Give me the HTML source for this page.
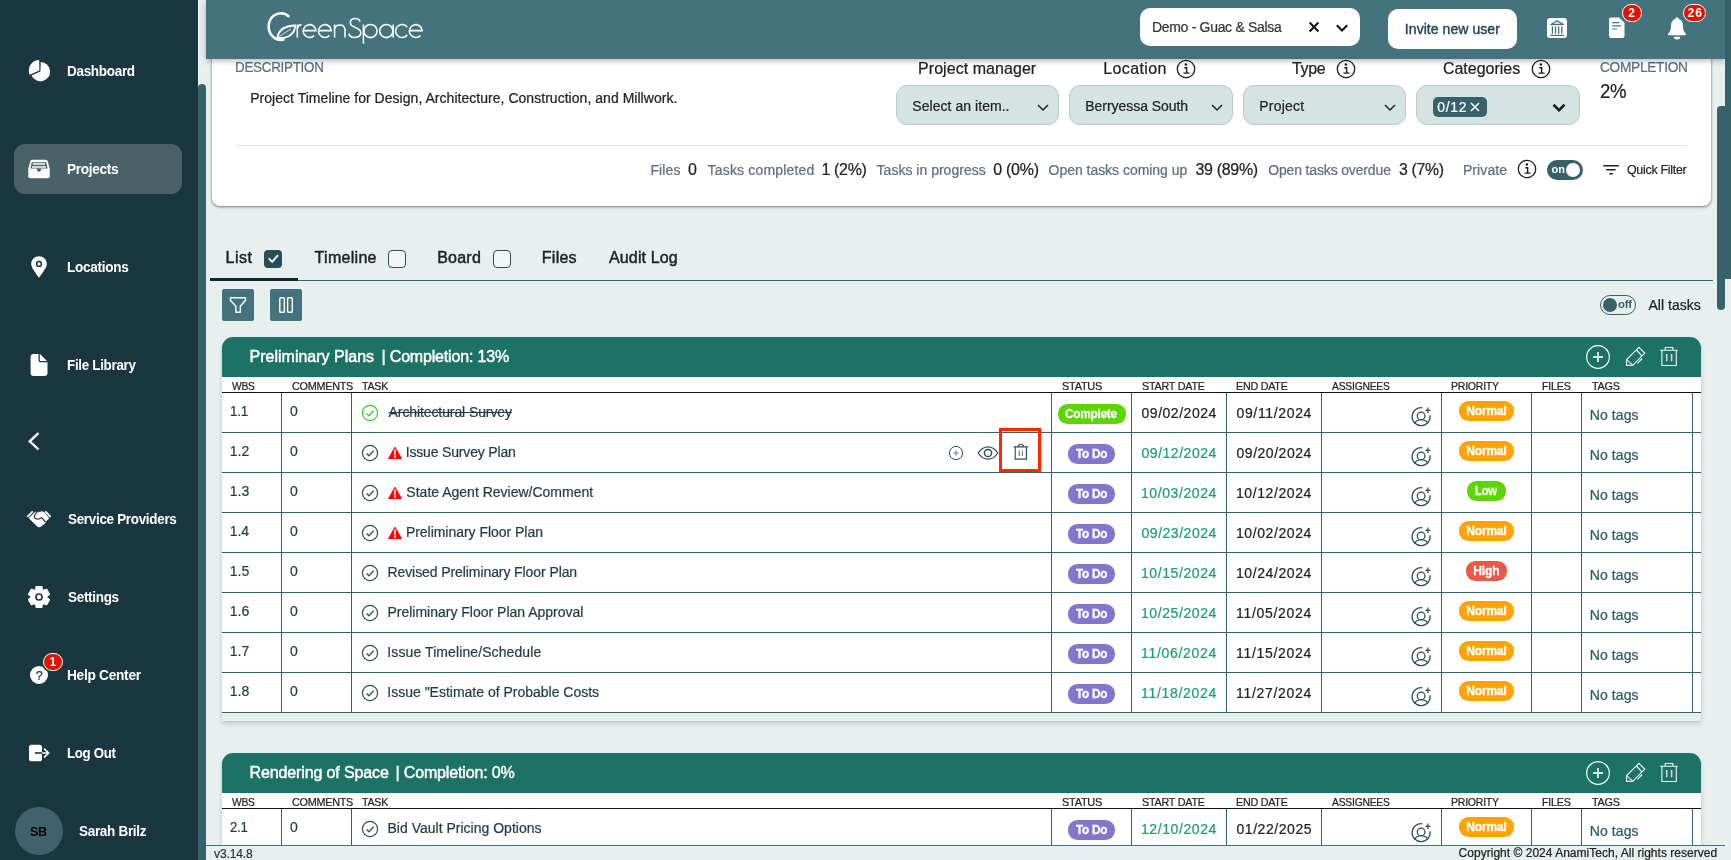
<!DOCTYPE html>
<html><head><meta charset="utf-8"><title>GreenSpace</title>
<style>
html,body{margin:0;padding:0;}
body{width:1731px;height:860px;overflow:hidden;position:relative;background:#e8f0ef;font-family:"Liberation Sans",sans-serif;}
.t{position:absolute;white-space:nowrap;display:block;transform-origin:0 0;}
.b{position:absolute;display:block;}
#w{position:absolute;left:0;top:0;width:1731px;height:860px;overflow:hidden;will-change:transform;transform:translateZ(0);}
</style></head><body><div id="w">
<div class="b" style="left:0px;top:0px;width:1731px;height:860px;background:#e8f0ef;"></div>
<div class="b" style="left:212px;top:40px;width:1499px;height:166px;background:#fff;border-radius:8px;box-shadow:0 1px 3px rgba(0,0,0,.45),0 0 2px rgba(0,0,0,.2);"></div>
<span class="t" style="left:235.23px;top:60px;font-size:14px;line-height:14px;color:#5b6f83;-webkit-text-stroke:0.22px #5b6f83;letter-spacing:-0.308px;transform:scaleX(0.9594);">DESCRIPTION</span>
<span class="t" style="left:250.18px;top:91px;font-size:14px;line-height:14px;color:#222;-webkit-text-stroke:0.22px #222;letter-spacing:0.034px;">Project Timeline for Design, Architecture, Construction, and Millwork.</span>
<div class="b" style="left:236px;top:145px;width:1451px;height:1px;background:#e1e4f0;"></div>
<span class="t" style="left:650.48px;top:163px;font-size:14px;line-height:14px;color:#5b6f83;-webkit-text-stroke:0.22px #5b6f83;letter-spacing:0.092px;">Files</span>
<span class="t" style="left:687.94px;top:162px;font-size:16px;line-height:16px;color:#222;-webkit-text-stroke:0.22px #222;letter-spacing:0.640px;">0</span>
<span class="t" style="left:707.62px;top:163px;font-size:14px;line-height:14px;color:#5b6f83;-webkit-text-stroke:0.22px #5b6f83;letter-spacing:0.164px;">Tasks completed</span>
<span class="t" style="left:821.40px;top:162px;font-size:16px;line-height:16px;color:#222;-webkit-text-stroke:0.22px #222;letter-spacing:-0.332px;">1 (2%)</span>
<span class="t" style="left:876.62px;top:163px;font-size:14px;line-height:14px;color:#5b6f83;-webkit-text-stroke:0.22px #5b6f83;letter-spacing:0.009px;">Tasks in progress</span>
<span class="t" style="left:993.24px;top:162px;font-size:16px;line-height:16px;color:#222;-webkit-text-stroke:0.22px #222;letter-spacing:-0.280px;">0 (0%)</span>
<span class="t" style="left:1048.57px;top:163px;font-size:14px;line-height:14px;color:#5b6f83;-webkit-text-stroke:0.22px #5b6f83;letter-spacing:-0.032px;">Open tasks coming up</span>
<span class="t" style="left:1195.44px;top:162px;font-size:16px;line-height:16px;color:#222;-webkit-text-stroke:0.22px #222;letter-spacing:-0.320px;">39 (89%)</span>
<span class="t" style="left:1268.17px;top:163px;font-size:14px;line-height:14px;color:#5b6f83;-webkit-text-stroke:0.22px #5b6f83;letter-spacing:-0.148px;">Open tasks overdue</span>
<span class="t" style="left:1399.05px;top:162px;font-size:16px;line-height:16px;color:#222;-webkit-text-stroke:0.22px #222;letter-spacing:-0.352px;transform:scaleX(0.9900);">3 (7%)</span>
<span class="t" style="left:1462.88px;top:163px;font-size:14px;line-height:14px;color:#5b6f83;-webkit-text-stroke:0.22px #5b6f83;letter-spacing:0.107px;">Private</span>
<svg class="b" style="left:1515.5px;top:158.2px;" width="22" height="22" viewBox="0 0 22 22"><circle cx="11" cy="11" r="8.700" fill="none" stroke="#1c1c1c" stroke-width="1.300"/><circle cx="10.900" cy="6.500" r="1.200" fill="#1c1c1c"/><path d="M9.300 9.700h2.300v5.200M8.500 15.100h6" stroke="#1c1c1c" stroke-width="1.400" fill="none"/></svg>
<div class="b" style="left:1547px;top:160px;width:36px;height:20px;background:#37626c;border-radius:10px;"></div>
<div class="b" style="left:1566.3px;top:163px;width:14px;height:14px;background:#fff;border-radius:7px;"></div>
<span class="t" style="left:1551.62px;top:164px;font-size:11px;line-height:11px;color:#fff;font-weight:700;letter-spacing:-0.075px;">on</span>
<svg class="b" style="left:1601px;top:160px;" width="20" height="20" viewBox="0 0 20 20"><path d="M2.800 5.700h14.500M5.700 9.700h8.400M8.900 13.800h2.400" stroke="#222" stroke-width="1.500" fill="none" stroke-linecap="round"/></svg>
<span class="t" style="left:1627.04px;top:164px;font-size:12.5px;line-height:12.5px;color:#222;-webkit-text-stroke:0.22px #222;letter-spacing:-0.275px;transform:scaleX(0.9920);">Quick Filter</span>
<span class="t" style="left:918.02px;top:61px;font-size:16px;line-height:16px;color:#222;-webkit-text-stroke:0.22px #222;letter-spacing:0.056px;">Project manager</span>
<span class="t" style="left:1103.32px;top:61px;font-size:16px;line-height:16px;color:#222;-webkit-text-stroke:0.22px #222;letter-spacing:0.366px;">Location</span>
<svg class="b" style="left:1174.6px;top:57.599999999999994px;" width="22" height="22" viewBox="0 0 22 22"><circle cx="11" cy="11" r="8.700" fill="none" stroke="#1c1c1c" stroke-width="1.300"/><circle cx="10.900" cy="6.500" r="1.200" fill="#1c1c1c"/><path d="M9.300 9.700h2.300v5.200M8.500 15.100h6" stroke="#1c1c1c" stroke-width="1.400" fill="none"/></svg>
<span class="t" style="left:1292.38px;top:61px;font-size:16px;line-height:16px;color:#222;-webkit-text-stroke:0.22px #222;letter-spacing:-0.352px;transform:scaleX(0.9993);">Type</span>
<svg class="b" style="left:1334.6px;top:57.599999999999994px;" width="22" height="22" viewBox="0 0 22 22"><circle cx="11" cy="11" r="8.700" fill="none" stroke="#1c1c1c" stroke-width="1.300"/><circle cx="10.900" cy="6.500" r="1.200" fill="#1c1c1c"/><path d="M9.300 9.700h2.300v5.200M8.500 15.100h6" stroke="#1c1c1c" stroke-width="1.400" fill="none"/></svg>
<span class="t" style="left:1442.90px;top:61px;font-size:16px;line-height:16px;color:#222;-webkit-text-stroke:0.22px #222;letter-spacing:0.000px;">Categories</span>
<svg class="b" style="left:1529.9px;top:57.599999999999994px;" width="22" height="22" viewBox="0 0 22 22"><circle cx="11" cy="11" r="8.700" fill="none" stroke="#1c1c1c" stroke-width="1.300"/><circle cx="10.900" cy="6.500" r="1.200" fill="#1c1c1c"/><path d="M9.300 9.700h2.300v5.200M8.500 15.100h6" stroke="#1c1c1c" stroke-width="1.400" fill="none"/></svg>
<div class="b" style="left:896px;top:85px;width:163px;height:40px;background:#d5e4e2;border-radius:11px;border:1px solid #b9cdc6;box-sizing:border-box;"></div>
<span class="t" style="left:912.37px;top:99px;font-size:14px;line-height:14px;color:#222;-webkit-text-stroke:0.22px #222;letter-spacing:0.044px;">Select an item..</span>
<svg class="b" style="left:1035px;top:99px;" width="16" height="16" viewBox="0 0 16 16"><path d="M3 6.0L8 11.0L13 6.0" stroke="#222" stroke-width="1.5" fill="none"/></svg>
<div class="b" style="left:1069px;top:85px;width:164px;height:40px;background:#d5e4e2;border-radius:11px;border:1px solid #b9cdc6;box-sizing:border-box;"></div>
<span class="t" style="left:1085.28px;top:99px;font-size:14px;line-height:14px;color:#222;-webkit-text-stroke:0.22px #222;letter-spacing:-0.043px;">Berryessa South</span>
<svg class="b" style="left:1208.7px;top:99px;" width="16" height="16" viewBox="0 0 16 16"><path d="M3 6.0L8 11.0L13 6.0" stroke="#222" stroke-width="1.5" fill="none"/></svg>
<div class="b" style="left:1243px;top:85px;width:163px;height:40px;background:#d5e4e2;border-radius:11px;border:1px solid #b9cdc6;box-sizing:border-box;"></div>
<span class="t" style="left:1259.18px;top:99px;font-size:14px;line-height:14px;color:#222;-webkit-text-stroke:0.22px #222;letter-spacing:0.247px;">Project</span>
<svg class="b" style="left:1381.7px;top:99px;" width="16" height="16" viewBox="0 0 16 16"><path d="M3 6.0L8 11.0L13 6.0" stroke="#222" stroke-width="1.5" fill="none"/></svg>
<div class="b" style="left:1416px;top:85px;width:164px;height:40px;background:#d5e4e2;border-radius:11px;border:1px solid #b9cdc6;box-sizing:border-box;"></div>
<svg class="b" style="left:1550.7px;top:99px;" width="16" height="16" viewBox="0 0 16 16"><path d="M2.5 5.75L8 11.25L13.5 5.75" stroke="#1a1a1a" stroke-width="2.5" fill="none"/></svg>
<div class="b" style="left:1433px;top:97px;width:54px;height:20px;background:#37626c;border-radius:5px;"></div>
<span class="t" style="left:1437.31px;top:100px;font-size:14px;line-height:14px;color:#fff;-webkit-text-stroke:0.22px #fff;letter-spacing:0.630px;">0/12</span>
<svg class="b" style="left:1469px;top:101px;" width="12" height="12" viewBox="0 0 12 12"><path d="M2 2l8 8M10 2l-8 8" stroke="#fff" stroke-width="1.5"/></svg>
<span class="t" style="left:1599.51px;top:60px;font-size:14px;line-height:14px;color:#5b6f83;-webkit-text-stroke:0.22px #5b6f83;letter-spacing:-0.308px;transform:scaleX(0.9793);">COMPLETION</span>
<span class="t" style="left:1599.67px;top:81px;font-size:20px;line-height:20px;color:#222;-webkit-text-stroke:0.22px #222;letter-spacing:-0.440px;transform:scaleX(0.9268);">2%</span>
<div class="b" style="left:210px;top:280px;width:1503px;height:1px;background:#37626c;"></div>
<div class="b" style="left:210px;top:278px;width:88px;height:3px;background:#15262c;"></div>
<span class="t" style="left:225.62px;top:250px;font-size:16px;line-height:16px;color:#222;-webkit-text-stroke:0.45px #222;letter-spacing:0.467px;">List</span>
<span class="t" style="left:314.58px;top:250px;font-size:16px;line-height:16px;color:#222;-webkit-text-stroke:0.45px #222;letter-spacing:0.289px;">Timeline</span>
<span class="t" style="left:437.22px;top:250px;font-size:16px;line-height:16px;color:#222;-webkit-text-stroke:0.45px #222;letter-spacing:0.225px;">Board</span>
<span class="t" style="left:541.82px;top:250px;font-size:16px;line-height:16px;color:#222;-webkit-text-stroke:0.45px #222;letter-spacing:0.245px;">Files</span>
<span class="t" style="left:609.00px;top:250px;font-size:16px;line-height:16px;color:#222;-webkit-text-stroke:0.45px #222;letter-spacing:0.145px;">Audit Log</span>
<div class="b" style="left:264px;top:250px;width:18px;height:18px;background:#274e59;border-radius:4px;"></div>
<svg class="b" style="left:264px;top:250px;" width="18" height="18" viewBox="0 0 18 18"><path d="M4.800 8.400l3.400 3.400L14 5.100" stroke="#fff" stroke-width="1.900" fill="none"/></svg>
<div class="b" style="left:388px;top:250px;width:18px;height:18px;background:#f1f6f6;border-radius:4px;border:1.3px solid #2d4f5b;box-sizing:border-box;"></div>
<div class="b" style="left:493px;top:250px;width:18px;height:18px;background:#f1f6f6;border-radius:4px;border:1.3px solid #2d4f5b;box-sizing:border-box;"></div>
<div class="b" style="left:222px;top:289px;width:32px;height:32px;background:#44737e;border-radius:2px;"></div>
<svg class="b" style="left:222px;top:289px;" width="32" height="32" viewBox="0 0 32 32"><path d="M8.400 8.700H23.500V11.300L18.300 17.300V23.200H13.900V17.300L8.400 11.300z" stroke="#fff" stroke-width="1.400" fill="none" stroke-linejoin="round"/></svg>
<div class="b" style="left:270px;top:289px;width:32px;height:32px;background:#44737e;border-radius:2px;"></div>
<svg class="b" style="left:270px;top:289px;" width="32" height="32" viewBox="0 0 32 32"><rect x="9.800" y="8.700" width="4.500" height="14.500" rx="0.800" stroke="#fff" stroke-width="1.400" fill="none"/><rect x="17.600" y="8.700" width="4.700" height="14.500" rx="0.800" stroke="#fff" stroke-width="1.400" fill="none"/></svg>
<div class="b" style="left:1600px;top:294.8px;width:36.2px;height:20.2px;background:transparent;border-radius:10.100px;border:1.200px solid #37626c;box-sizing:border-box;"></div>
<div class="b" style="left:1603px;top:298px;width:13.8px;height:13.8px;background:#37626c;border-radius:7px;"></div>
<span class="t" style="left:1617.80px;top:299px;font-size:11.5px;line-height:11.5px;color:#37626c;font-weight:700;letter-spacing:-0.253px;transform:scaleX(0.9847);">off</span>
<span class="t" style="left:1648.40px;top:298px;font-size:14px;line-height:14px;color:#222;-webkit-text-stroke:0.22px #222;letter-spacing:0.043px;">All tasks</span>
<div class="b" style="left:222px;top:337px;width:1479px;height:384px;background:#e8f0ef;border-radius:11px 11px 0 0;box-shadow:0 3px 5px rgba(0,0,0,.16),0 0 2px rgba(0,0,0,.05);"></div>
<div class="b" style="left:222px;top:367px;width:1479px;height:346px;background:#fff;"></div>
<div class="b" style="left:222px;top:337px;width:1479px;height:40px;background:#1c7365;border-radius:11px 11px 0 0;"></div>
<span class="t" style="left:249.52px;top:349px;font-size:16px;line-height:16px;color:#fff;-webkit-text-stroke:0.45px #fff;letter-spacing:0.004px;">Preliminary Plans</span>
<span class="t" style="left:381.54px;top:349px;font-size:16px;line-height:16px;color:#fff;-webkit-text-stroke:0.45px #fff;letter-spacing:-0.179px;">| Completion: 13%</span>
<svg class="b" style="left:1584px;top:343px;" width="28" height="28" viewBox="0 0 28 28"><circle cx="14" cy="14" r="11.350" fill="none" stroke="#fff" stroke-width="1.150"/><path d="M14 9v10M9 14h10" stroke="#d9ebe7" stroke-width="1.900"/></svg>
<svg class="b" style="left:1623px;top:345px;" width="24" height="24" viewBox="0 0 24 24"><path d="M16 2.400L21.700 8.100L9.700 20.300H3.500V14.500zM3.700 14.700L9.500 20.100M13.900 5.500L18.800 10.900M14.600 18.300L19.100 13.500" stroke="#e9f3f1" stroke-width="1.150" fill="none" stroke-linejoin="miter"/></svg>
<svg class="b" style="left:1657px;top:345px;" width="24" height="24" viewBox="0 0 24 24"><path d="M3.100 5.200h17.700M8.200 5.200V2.500h7.600v2.700M4.900 5.200v15.300h14.400V5.200" stroke="#e9f3f1" stroke-width="1.150" fill="none"/><path d="M9.700 9v7.300M14.600 9v7.300" stroke="#cfe4e0" stroke-width="1.500" fill="none"/></svg>
<span class="t" style="left:232.20px;top:381px;font-size:11px;line-height:11px;color:#222;-webkit-text-stroke:0.22px #222;letter-spacing:-0.242px;transform:scaleX(0.9294);">WBS</span>
<span class="t" style="left:291.66px;top:381px;font-size:11px;line-height:11px;color:#222;-webkit-text-stroke:0.22px #222;letter-spacing:-0.242px;transform:scaleX(0.9813);">COMMENTS</span>
<span class="t" style="left:362.39px;top:381px;font-size:11px;line-height:11px;color:#222;-webkit-text-stroke:0.22px #222;letter-spacing:-0.242px;transform:scaleX(0.9671);">TASK</span>
<span class="t" style="left:1061.51px;top:381px;font-size:11px;line-height:11px;color:#222;-webkit-text-stroke:0.22px #222;letter-spacing:-0.242px;transform:scaleX(0.9924);">STATUS</span>
<span class="t" style="left:1141.51px;top:381px;font-size:11px;line-height:11px;color:#222;-webkit-text-stroke:0.22px #222;letter-spacing:-0.242px;transform:scaleX(0.9799);">START DATE</span>
<span class="t" style="left:1236.14px;top:381px;font-size:11px;line-height:11px;color:#222;-webkit-text-stroke:0.22px #222;letter-spacing:-0.242px;transform:scaleX(0.9755);">END DATE</span>
<span class="t" style="left:1332.30px;top:381px;font-size:11px;line-height:11px;color:#222;-webkit-text-stroke:0.22px #222;letter-spacing:-0.242px;transform:scaleX(0.9395);">ASSIGNEES</span>
<span class="t" style="left:1451.46px;top:381px;font-size:11px;line-height:11px;color:#222;-webkit-text-stroke:0.22px #222;letter-spacing:-0.242px;transform:scaleX(0.9567);">PRIORITY</span>
<span class="t" style="left:1541.54px;top:381px;font-size:11px;line-height:11px;color:#222;-webkit-text-stroke:0.22px #222;letter-spacing:-0.242px;transform:scaleX(0.9774);">FILES</span>
<span class="t" style="left:1591.88px;top:381px;font-size:11px;line-height:11px;color:#222;-webkit-text-stroke:0.22px #222;letter-spacing:-0.242px;transform:scaleX(0.9852);">TAGS</span>
<div class="b" style="left:222px;top:392px;width:1479px;height:1px;background:#111;"></div>
<div class="b" style="left:222px;top:432px;width:1479px;height:1px;background:#33606b;"></div>
<span class="t" style="left:229.79px;top:404px;font-size:14px;line-height:14px;color:#1f3b45;-webkit-text-stroke:0.22px #1f3b45;letter-spacing:-0.308px;transform:scaleX(0.9613);">1.1</span>
<span class="t" style="left:290.01px;top:404px;font-size:14px;line-height:14px;color:#1f3b45;-webkit-text-stroke:0.22px #1f3b45;letter-spacing:0.010px;">0</span>
<svg class="b" style="left:360px;top:403.2px;" width="20" height="20" viewBox="0 0 20 20"><circle cx="10" cy="10" r="7.6" fill="none" stroke="#2fd02f" stroke-width="1.25"/><path d="M6.5 10.400l2.400 2.400L13.700 7.800" fill="none" stroke="#2fd02f" stroke-width="1.25"/></svg>
<span class="t" style="left:388.60px;top:405px;font-size:14px;line-height:14px;color:#1f3b45;-webkit-text-stroke:0.22px #1f3b45;letter-spacing:-0.100px;text-decoration:line-through;">Architectural Survey</span>
<div class="b" style="left:1058px;top:404px;width:68px;height:20px;background:#5bd603;border-radius:9.500px;"></div>
<span class="t" style="left:1065.43px;top:408px;font-size:12px;line-height:12px;color:#fff;font-weight:700;-webkit-text-stroke:0.3px #fff;letter-spacing:-0.264px;transform:scaleX(0.9871);">Complete</span>
<span class="t" style="left:1141.51px;top:406px;font-size:14px;line-height:14px;color:#222;-webkit-text-stroke:0.22px #222;letter-spacing:0.530px;">09/02/2024</span>
<span class="t" style="left:1236.51px;top:406px;font-size:14px;line-height:14px;color:#222;-webkit-text-stroke:0.22px #222;letter-spacing:0.647px;">09/11/2024</span>
<svg class="b" style="left:1408.8px;top:405px;" width="24" height="24" viewBox="0 0 24 24"><g fill="none" stroke="#2a505c" stroke-width="1.250"><path d="M13.350 2.790A9 9 0 1 0 21.010 10.450"/><circle cx="12.100" cy="10.900" r="3.800"/><path d="M5.400 18.300A8.200 8.200 0 0 1 19.100 18.300"/><path d="M18.900 2.600v5.400M16.200 5.300h5.400"/></g></svg>
<div class="b" style="left:1459px;top:401px;width:55px;height:20px;background:#ffa305;border-radius:9.500px;"></div>
<span class="t" style="left:1466.22px;top:405px;font-size:12px;line-height:12px;color:#fff;font-weight:700;-webkit-text-stroke:0.3px #fff;letter-spacing:-0.136px;">Normal</span>
<span class="t" style="left:1589.68px;top:408px;font-size:14px;line-height:14px;color:#2b5866;-webkit-text-stroke:0.22px #2b5866;letter-spacing:0.113px;">No tags</span>
<div class="b" style="left:222px;top:472px;width:1479px;height:1px;background:#33606b;"></div>
<span class="t" style="left:229.75px;top:444px;font-size:14px;line-height:14px;color:#1f3b45;-webkit-text-stroke:0.22px #1f3b45;letter-spacing:0.010px;">1.2</span>
<span class="t" style="left:290.01px;top:444px;font-size:14px;line-height:14px;color:#1f3b45;-webkit-text-stroke:0.22px #1f3b45;letter-spacing:0.010px;">0</span>
<svg class="b" style="left:360px;top:443.2px;" width="20" height="20" viewBox="0 0 20 20"><circle cx="10" cy="10" r="7.6" fill="none" stroke="#2d4f5b" stroke-width="1.25"/><path d="M6.5 10.400l2.400 2.400L13.700 7.800" fill="none" stroke="#2d4f5b" stroke-width="1.25"/></svg>
<svg class="b" style="left:388px;top:446px;" width="14" height="14" viewBox="0 0 14 14"><path d="M6.950 1.200L13.300 12.500H0.600z" fill="#ff0505" stroke="#ff0505" stroke-width="1" stroke-linejoin="round"/><path d="M6.950 3.300v6.200M6.950 10.100v1.700" stroke="#ffb3b3" stroke-width="2"/></svg>
<span class="t" style="left:405.74px;top:445px;font-size:14px;line-height:14px;color:#1f3b45;-webkit-text-stroke:0.22px #1f3b45;letter-spacing:-0.171px;">Issue Survey Plan</span>
<div class="b" style="left:1068px;top:444px;width:47px;height:20px;background:#8576cc;border-radius:9.500px;"></div>
<span class="t" style="left:1075.88px;top:448px;font-size:12px;line-height:12px;color:#fff;font-weight:700;-webkit-text-stroke:0.3px #fff;letter-spacing:-0.264px;transform:scaleX(0.9770);">To Do</span>
<span class="t" style="left:1141.51px;top:446px;font-size:14px;line-height:14px;color:#1f9d6e;-webkit-text-stroke:0.22px #1f9d6e;letter-spacing:0.530px;">09/12/2024</span>
<span class="t" style="left:1236.51px;top:446px;font-size:14px;line-height:14px;color:#222;-webkit-text-stroke:0.22px #222;letter-spacing:0.530px;">09/20/2024</span>
<svg class="b" style="left:1408.8px;top:445px;" width="24" height="24" viewBox="0 0 24 24"><g fill="none" stroke="#2a505c" stroke-width="1.250"><path d="M13.350 2.790A9 9 0 1 0 21.010 10.450"/><circle cx="12.100" cy="10.900" r="3.800"/><path d="M5.400 18.300A8.200 8.200 0 0 1 19.100 18.300"/><path d="M18.900 2.600v5.400M16.200 5.300h5.400"/></g></svg>
<div class="b" style="left:1459px;top:441px;width:55px;height:20px;background:#ffa305;border-radius:9.500px;"></div>
<span class="t" style="left:1466.22px;top:445px;font-size:12px;line-height:12px;color:#fff;font-weight:700;-webkit-text-stroke:0.3px #fff;letter-spacing:-0.136px;">Normal</span>
<span class="t" style="left:1589.68px;top:448px;font-size:14px;line-height:14px;color:#2b5866;-webkit-text-stroke:0.22px #2b5866;letter-spacing:0.113px;">No tags</span>
<div class="b" style="left:222px;top:512px;width:1479px;height:1px;background:#33606b;"></div>
<span class="t" style="left:229.75px;top:484px;font-size:14px;line-height:14px;color:#1f3b45;-webkit-text-stroke:0.22px #1f3b45;letter-spacing:-0.025px;">1.3</span>
<span class="t" style="left:290.01px;top:484px;font-size:14px;line-height:14px;color:#1f3b45;-webkit-text-stroke:0.22px #1f3b45;letter-spacing:0.010px;">0</span>
<svg class="b" style="left:360px;top:483.2px;" width="20" height="20" viewBox="0 0 20 20"><circle cx="10" cy="10" r="7.6" fill="none" stroke="#2d4f5b" stroke-width="1.25"/><path d="M6.5 10.400l2.400 2.400L13.700 7.800" fill="none" stroke="#2d4f5b" stroke-width="1.25"/></svg>
<svg class="b" style="left:388px;top:486px;" width="14" height="14" viewBox="0 0 14 14"><path d="M6.950 1.200L13.300 12.500H0.600z" fill="#ff0505" stroke="#ff0505" stroke-width="1" stroke-linejoin="round"/><path d="M6.950 3.300v6.200M6.950 10.100v1.700" stroke="#ffb3b3" stroke-width="2"/></svg>
<span class="t" style="left:406.37px;top:485px;font-size:14px;line-height:14px;color:#1f3b45;-webkit-text-stroke:0.22px #1f3b45;letter-spacing:0.002px;">State Agent Review/Comment</span>
<div class="b" style="left:1068px;top:484px;width:47px;height:20px;background:#8576cc;border-radius:9.500px;"></div>
<span class="t" style="left:1075.88px;top:488px;font-size:12px;line-height:12px;color:#fff;font-weight:700;-webkit-text-stroke:0.3px #fff;letter-spacing:-0.264px;transform:scaleX(0.9770);">To Do</span>
<span class="t" style="left:1140.95px;top:486px;font-size:14px;line-height:14px;color:#1f9d6e;-webkit-text-stroke:0.22px #1f9d6e;letter-spacing:0.592px;">10/03/2024</span>
<span class="t" style="left:1235.95px;top:486px;font-size:14px;line-height:14px;color:#222;-webkit-text-stroke:0.22px #222;letter-spacing:0.592px;">10/12/2024</span>
<svg class="b" style="left:1408.8px;top:485px;" width="24" height="24" viewBox="0 0 24 24"><g fill="none" stroke="#2a505c" stroke-width="1.250"><path d="M13.350 2.790A9 9 0 1 0 21.010 10.450"/><circle cx="12.100" cy="10.900" r="3.800"/><path d="M5.400 18.300A8.200 8.200 0 0 1 19.100 18.300"/><path d="M18.900 2.600v5.400M16.200 5.300h5.400"/></g></svg>
<div class="b" style="left:1467px;top:481px;width:39px;height:20px;background:#5bd603;border-radius:9.500px;"></div>
<span class="t" style="left:1475.17px;top:485px;font-size:12px;line-height:12px;color:#fff;font-weight:700;-webkit-text-stroke:0.3px #fff;letter-spacing:-0.264px;transform:scaleX(0.9387);">Low</span>
<span class="t" style="left:1589.68px;top:488px;font-size:14px;line-height:14px;color:#2b5866;-webkit-text-stroke:0.22px #2b5866;letter-spacing:0.113px;">No tags</span>
<div class="b" style="left:222px;top:552px;width:1479px;height:1px;background:#33606b;"></div>
<span class="t" style="left:229.75px;top:524px;font-size:14px;line-height:14px;color:#1f3b45;-webkit-text-stroke:0.22px #1f3b45;letter-spacing:-0.130px;">1.4</span>
<span class="t" style="left:290.01px;top:524px;font-size:14px;line-height:14px;color:#1f3b45;-webkit-text-stroke:0.22px #1f3b45;letter-spacing:0.010px;">0</span>
<svg class="b" style="left:360px;top:523.2px;" width="20" height="20" viewBox="0 0 20 20"><circle cx="10" cy="10" r="7.6" fill="none" stroke="#2d4f5b" stroke-width="1.25"/><path d="M6.5 10.400l2.400 2.400L13.700 7.800" fill="none" stroke="#2d4f5b" stroke-width="1.25"/></svg>
<svg class="b" style="left:388px;top:526px;" width="14" height="14" viewBox="0 0 14 14"><path d="M6.950 1.200L13.300 12.500H0.600z" fill="#ff0505" stroke="#ff0505" stroke-width="1" stroke-linejoin="round"/><path d="M6.950 3.300v6.200M6.950 10.100v1.700" stroke="#ffb3b3" stroke-width="2"/></svg>
<span class="t" style="left:405.88px;top:525px;font-size:14px;line-height:14px;color:#1f3b45;-webkit-text-stroke:0.22px #1f3b45;letter-spacing:-0.030px;">Preliminary Floor Plan</span>
<div class="b" style="left:1068px;top:524px;width:47px;height:20px;background:#8576cc;border-radius:9.500px;"></div>
<span class="t" style="left:1075.88px;top:528px;font-size:12px;line-height:12px;color:#fff;font-weight:700;-webkit-text-stroke:0.3px #fff;letter-spacing:-0.264px;transform:scaleX(0.9770);">To Do</span>
<span class="t" style="left:1141.51px;top:526px;font-size:14px;line-height:14px;color:#1f9d6e;-webkit-text-stroke:0.22px #1f9d6e;letter-spacing:0.530px;">09/23/2024</span>
<span class="t" style="left:1235.95px;top:526px;font-size:14px;line-height:14px;color:#222;-webkit-text-stroke:0.22px #222;letter-spacing:0.592px;">10/02/2024</span>
<svg class="b" style="left:1408.8px;top:525px;" width="24" height="24" viewBox="0 0 24 24"><g fill="none" stroke="#2a505c" stroke-width="1.250"><path d="M13.350 2.790A9 9 0 1 0 21.010 10.450"/><circle cx="12.100" cy="10.900" r="3.800"/><path d="M5.400 18.300A8.200 8.200 0 0 1 19.100 18.300"/><path d="M18.900 2.600v5.400M16.200 5.300h5.400"/></g></svg>
<div class="b" style="left:1459px;top:521px;width:55px;height:20px;background:#ffa305;border-radius:9.500px;"></div>
<span class="t" style="left:1466.22px;top:525px;font-size:12px;line-height:12px;color:#fff;font-weight:700;-webkit-text-stroke:0.3px #fff;letter-spacing:-0.136px;">Normal</span>
<span class="t" style="left:1589.68px;top:528px;font-size:14px;line-height:14px;color:#2b5866;-webkit-text-stroke:0.22px #2b5866;letter-spacing:0.113px;">No tags</span>
<div class="b" style="left:222px;top:592px;width:1479px;height:1px;background:#33606b;"></div>
<span class="t" style="left:229.75px;top:564px;font-size:14px;line-height:14px;color:#1f3b45;-webkit-text-stroke:0.22px #1f3b45;letter-spacing:-0.025px;">1.5</span>
<span class="t" style="left:290.01px;top:564px;font-size:14px;line-height:14px;color:#1f3b45;-webkit-text-stroke:0.22px #1f3b45;letter-spacing:0.010px;">0</span>
<svg class="b" style="left:360px;top:563.2px;" width="20" height="20" viewBox="0 0 20 20"><circle cx="10" cy="10" r="7.6" fill="none" stroke="#2d4f5b" stroke-width="1.25"/><path d="M6.5 10.400l2.400 2.400L13.700 7.800" fill="none" stroke="#2d4f5b" stroke-width="1.25"/></svg>
<span class="t" style="left:387.48px;top:565px;font-size:14px;line-height:14px;color:#1f3b45;-webkit-text-stroke:0.22px #1f3b45;letter-spacing:-0.086px;">Revised Preliminary Floor Plan</span>
<div class="b" style="left:1068px;top:564px;width:47px;height:20px;background:#8576cc;border-radius:9.500px;"></div>
<span class="t" style="left:1075.88px;top:568px;font-size:12px;line-height:12px;color:#fff;font-weight:700;-webkit-text-stroke:0.3px #fff;letter-spacing:-0.264px;transform:scaleX(0.9770);">To Do</span>
<span class="t" style="left:1140.95px;top:566px;font-size:14px;line-height:14px;color:#1f9d6e;-webkit-text-stroke:0.22px #1f9d6e;letter-spacing:0.592px;">10/15/2024</span>
<span class="t" style="left:1235.95px;top:566px;font-size:14px;line-height:14px;color:#222;-webkit-text-stroke:0.22px #222;letter-spacing:0.592px;">10/24/2024</span>
<svg class="b" style="left:1408.8px;top:565px;" width="24" height="24" viewBox="0 0 24 24"><g fill="none" stroke="#2a505c" stroke-width="1.250"><path d="M13.350 2.790A9 9 0 1 0 21.010 10.450"/><circle cx="12.100" cy="10.900" r="3.800"/><path d="M5.400 18.300A8.200 8.200 0 0 1 19.100 18.300"/><path d="M18.900 2.600v5.400M16.200 5.300h5.400"/></g></svg>
<div class="b" style="left:1466px;top:561px;width:41px;height:20px;background:#ea5946;border-radius:9.500px;"></div>
<span class="t" style="left:1473.22px;top:565px;font-size:12px;line-height:12px;color:#fff;font-weight:700;-webkit-text-stroke:0.3px #fff;letter-spacing:-0.113px;">High</span>
<span class="t" style="left:1589.68px;top:568px;font-size:14px;line-height:14px;color:#2b5866;-webkit-text-stroke:0.22px #2b5866;letter-spacing:0.113px;">No tags</span>
<div class="b" style="left:222px;top:632px;width:1479px;height:1px;background:#33606b;"></div>
<span class="t" style="left:229.75px;top:604px;font-size:14px;line-height:14px;color:#1f3b45;-webkit-text-stroke:0.22px #1f3b45;letter-spacing:-0.025px;">1.6</span>
<span class="t" style="left:290.01px;top:604px;font-size:14px;line-height:14px;color:#1f3b45;-webkit-text-stroke:0.22px #1f3b45;letter-spacing:0.010px;">0</span>
<svg class="b" style="left:360px;top:603.2px;" width="20" height="20" viewBox="0 0 20 20"><circle cx="10" cy="10" r="7.6" fill="none" stroke="#2d4f5b" stroke-width="1.25"/><path d="M6.5 10.400l2.400 2.400L13.700 7.800" fill="none" stroke="#2d4f5b" stroke-width="1.25"/></svg>
<span class="t" style="left:387.48px;top:605px;font-size:14px;line-height:14px;color:#1f3b45;-webkit-text-stroke:0.22px #1f3b45;letter-spacing:-0.004px;">Preliminary Floor Plan Approval</span>
<div class="b" style="left:1068px;top:604px;width:47px;height:20px;background:#8576cc;border-radius:9.500px;"></div>
<span class="t" style="left:1075.88px;top:608px;font-size:12px;line-height:12px;color:#fff;font-weight:700;-webkit-text-stroke:0.3px #fff;letter-spacing:-0.264px;transform:scaleX(0.9770);">To Do</span>
<span class="t" style="left:1140.95px;top:606px;font-size:14px;line-height:14px;color:#1f9d6e;-webkit-text-stroke:0.22px #1f9d6e;letter-spacing:0.592px;">10/25/2024</span>
<span class="t" style="left:1235.95px;top:606px;font-size:14px;line-height:14px;color:#222;-webkit-text-stroke:0.22px #222;letter-spacing:0.709px;">11/05/2024</span>
<svg class="b" style="left:1408.8px;top:605px;" width="24" height="24" viewBox="0 0 24 24"><g fill="none" stroke="#2a505c" stroke-width="1.250"><path d="M13.350 2.790A9 9 0 1 0 21.010 10.450"/><circle cx="12.100" cy="10.900" r="3.800"/><path d="M5.400 18.300A8.200 8.200 0 0 1 19.100 18.300"/><path d="M18.900 2.600v5.400M16.200 5.300h5.400"/></g></svg>
<div class="b" style="left:1459px;top:601px;width:55px;height:20px;background:#ffa305;border-radius:9.500px;"></div>
<span class="t" style="left:1466.22px;top:605px;font-size:12px;line-height:12px;color:#fff;font-weight:700;-webkit-text-stroke:0.3px #fff;letter-spacing:-0.136px;">Normal</span>
<span class="t" style="left:1589.68px;top:608px;font-size:14px;line-height:14px;color:#2b5866;-webkit-text-stroke:0.22px #2b5866;letter-spacing:0.113px;">No tags</span>
<div class="b" style="left:222px;top:672px;width:1479px;height:1px;background:#33606b;"></div>
<span class="t" style="left:229.75px;top:644px;font-size:14px;line-height:14px;color:#1f3b45;-webkit-text-stroke:0.22px #1f3b45;letter-spacing:0.010px;">1.7</span>
<span class="t" style="left:290.01px;top:644px;font-size:14px;line-height:14px;color:#1f3b45;-webkit-text-stroke:0.22px #1f3b45;letter-spacing:0.010px;">0</span>
<svg class="b" style="left:360px;top:643.2px;" width="20" height="20" viewBox="0 0 20 20"><circle cx="10" cy="10" r="7.6" fill="none" stroke="#2d4f5b" stroke-width="1.25"/><path d="M6.5 10.400l2.400 2.400L13.700 7.800" fill="none" stroke="#2d4f5b" stroke-width="1.25"/></svg>
<span class="t" style="left:387.34px;top:645px;font-size:14px;line-height:14px;color:#1f3b45;-webkit-text-stroke:0.22px #1f3b45;letter-spacing:0.098px;">Issue Timeline/Schedule</span>
<div class="b" style="left:1068px;top:644px;width:47px;height:20px;background:#8576cc;border-radius:9.500px;"></div>
<span class="t" style="left:1075.88px;top:648px;font-size:12px;line-height:12px;color:#fff;font-weight:700;-webkit-text-stroke:0.3px #fff;letter-spacing:-0.264px;transform:scaleX(0.9770);">To Do</span>
<span class="t" style="left:1140.95px;top:646px;font-size:14px;line-height:14px;color:#1f9d6e;-webkit-text-stroke:0.22px #1f9d6e;letter-spacing:0.709px;">11/06/2024</span>
<span class="t" style="left:1235.95px;top:646px;font-size:14px;line-height:14px;color:#222;-webkit-text-stroke:0.22px #222;letter-spacing:0.709px;">11/15/2024</span>
<svg class="b" style="left:1408.8px;top:645px;" width="24" height="24" viewBox="0 0 24 24"><g fill="none" stroke="#2a505c" stroke-width="1.250"><path d="M13.350 2.790A9 9 0 1 0 21.010 10.450"/><circle cx="12.100" cy="10.900" r="3.800"/><path d="M5.400 18.300A8.200 8.200 0 0 1 19.100 18.300"/><path d="M18.900 2.600v5.400M16.200 5.300h5.400"/></g></svg>
<div class="b" style="left:1459px;top:641px;width:55px;height:20px;background:#ffa305;border-radius:9.500px;"></div>
<span class="t" style="left:1466.22px;top:645px;font-size:12px;line-height:12px;color:#fff;font-weight:700;-webkit-text-stroke:0.3px #fff;letter-spacing:-0.136px;">Normal</span>
<span class="t" style="left:1589.68px;top:648px;font-size:14px;line-height:14px;color:#2b5866;-webkit-text-stroke:0.22px #2b5866;letter-spacing:0.113px;">No tags</span>
<div class="b" style="left:222px;top:712px;width:1479px;height:1px;background:#33606b;"></div>
<span class="t" style="left:229.75px;top:684px;font-size:14px;line-height:14px;color:#1f3b45;-webkit-text-stroke:0.22px #1f3b45;letter-spacing:-0.025px;">1.8</span>
<span class="t" style="left:290.01px;top:684px;font-size:14px;line-height:14px;color:#1f3b45;-webkit-text-stroke:0.22px #1f3b45;letter-spacing:0.010px;">0</span>
<svg class="b" style="left:360px;top:683.2px;" width="20" height="20" viewBox="0 0 20 20"><circle cx="10" cy="10" r="7.6" fill="none" stroke="#2d4f5b" stroke-width="1.25"/><path d="M6.5 10.400l2.400 2.400L13.700 7.800" fill="none" stroke="#2d4f5b" stroke-width="1.25"/></svg>
<span class="t" style="left:387.34px;top:685px;font-size:14px;line-height:14px;color:#1f3b45;-webkit-text-stroke:0.22px #1f3b45;letter-spacing:-0.007px;">Issue &quot;Estimate of Probable Costs</span>
<div class="b" style="left:1068px;top:684px;width:47px;height:20px;background:#8576cc;border-radius:9.500px;"></div>
<span class="t" style="left:1075.88px;top:688px;font-size:12px;line-height:12px;color:#fff;font-weight:700;-webkit-text-stroke:0.3px #fff;letter-spacing:-0.264px;transform:scaleX(0.9770);">To Do</span>
<span class="t" style="left:1140.95px;top:686px;font-size:14px;line-height:14px;color:#1f9d6e;-webkit-text-stroke:0.22px #1f9d6e;letter-spacing:0.709px;">11/18/2024</span>
<span class="t" style="left:1235.95px;top:686px;font-size:14px;line-height:14px;color:#222;-webkit-text-stroke:0.22px #222;letter-spacing:0.709px;">11/27/2024</span>
<svg class="b" style="left:1408.8px;top:685px;" width="24" height="24" viewBox="0 0 24 24"><g fill="none" stroke="#2a505c" stroke-width="1.250"><path d="M13.350 2.790A9 9 0 1 0 21.010 10.450"/><circle cx="12.100" cy="10.900" r="3.800"/><path d="M5.400 18.300A8.200 8.200 0 0 1 19.100 18.300"/><path d="M18.900 2.600v5.400M16.200 5.300h5.400"/></g></svg>
<div class="b" style="left:1459px;top:681px;width:55px;height:20px;background:#ffa305;border-radius:9.500px;"></div>
<span class="t" style="left:1466.22px;top:685px;font-size:12px;line-height:12px;color:#fff;font-weight:700;-webkit-text-stroke:0.3px #fff;letter-spacing:-0.136px;">Normal</span>
<span class="t" style="left:1589.68px;top:688px;font-size:14px;line-height:14px;color:#2b5866;-webkit-text-stroke:0.22px #2b5866;letter-spacing:0.113px;">No tags</span>
<div class="b" style="left:281px;top:393px;width:1px;height:320px;background:#33606b;"></div>
<div class="b" style="left:351px;top:393px;width:1px;height:320px;background:#33606b;"></div>
<div class="b" style="left:1051px;top:393px;width:1px;height:320px;background:#33606b;"></div>
<div class="b" style="left:1131px;top:393px;width:1px;height:320px;background:#33606b;"></div>
<div class="b" style="left:1226px;top:393px;width:1px;height:320px;background:#33606b;"></div>
<div class="b" style="left:1321px;top:393px;width:1px;height:320px;background:#33606b;"></div>
<div class="b" style="left:1441px;top:393px;width:1px;height:320px;background:#33606b;"></div>
<div class="b" style="left:1531px;top:393px;width:1px;height:320px;background:#33606b;"></div>
<div class="b" style="left:1581px;top:393px;width:1px;height:320px;background:#33606b;"></div>
<div class="b" style="left:1692px;top:393px;width:1px;height:320px;background:#33606b;"></div>
<div class="b" style="left:222px;top:753px;width:1479px;height:93px;background:#e8f0ef;border-radius:11px 11px 0 0;box-shadow:0 3px 5px rgba(0,0,0,.16),0 0 2px rgba(0,0,0,.05);"></div>
<div class="b" style="left:222px;top:783px;width:1479px;height:63px;background:#fff;"></div>
<div class="b" style="left:222px;top:753px;width:1479px;height:40px;background:#1c7365;border-radius:11px 11px 0 0;"></div>
<span class="t" style="left:249.52px;top:765px;font-size:16px;line-height:16px;color:#fff;-webkit-text-stroke:0.45px #fff;letter-spacing:-0.125px;">Rendering of Space</span>
<span class="t" style="left:395.44px;top:765px;font-size:16px;line-height:16px;color:#fff;-webkit-text-stroke:0.45px #fff;letter-spacing:-0.145px;">| Completion: 0%</span>
<svg class="b" style="left:1584px;top:759px;" width="28" height="28" viewBox="0 0 28 28"><circle cx="14" cy="14" r="11.350" fill="none" stroke="#fff" stroke-width="1.150"/><path d="M14 9v10M9 14h10" stroke="#d9ebe7" stroke-width="1.900"/></svg>
<svg class="b" style="left:1623px;top:761px;" width="24" height="24" viewBox="0 0 24 24"><path d="M16 2.400L21.700 8.100L9.700 20.300H3.500V14.500zM3.700 14.700L9.500 20.100M13.900 5.500L18.800 10.900M14.600 18.300L19.100 13.500" stroke="#e9f3f1" stroke-width="1.150" fill="none" stroke-linejoin="miter"/></svg>
<svg class="b" style="left:1657px;top:761px;" width="24" height="24" viewBox="0 0 24 24"><path d="M3.100 5.200h17.700M8.200 5.200V2.500h7.600v2.700M4.900 5.200v15.300h14.400V5.200" stroke="#e9f3f1" stroke-width="1.150" fill="none"/><path d="M9.700 9v7.300M14.600 9v7.300" stroke="#cfe4e0" stroke-width="1.500" fill="none"/></svg>
<span class="t" style="left:232.20px;top:797px;font-size:11px;line-height:11px;color:#222;-webkit-text-stroke:0.22px #222;letter-spacing:-0.242px;transform:scaleX(0.9294);">WBS</span>
<span class="t" style="left:291.66px;top:797px;font-size:11px;line-height:11px;color:#222;-webkit-text-stroke:0.22px #222;letter-spacing:-0.242px;transform:scaleX(0.9813);">COMMENTS</span>
<span class="t" style="left:362.39px;top:797px;font-size:11px;line-height:11px;color:#222;-webkit-text-stroke:0.22px #222;letter-spacing:-0.242px;transform:scaleX(0.9671);">TASK</span>
<span class="t" style="left:1061.51px;top:797px;font-size:11px;line-height:11px;color:#222;-webkit-text-stroke:0.22px #222;letter-spacing:-0.242px;transform:scaleX(0.9924);">STATUS</span>
<span class="t" style="left:1141.51px;top:797px;font-size:11px;line-height:11px;color:#222;-webkit-text-stroke:0.22px #222;letter-spacing:-0.242px;transform:scaleX(0.9799);">START DATE</span>
<span class="t" style="left:1236.14px;top:797px;font-size:11px;line-height:11px;color:#222;-webkit-text-stroke:0.22px #222;letter-spacing:-0.242px;transform:scaleX(0.9755);">END DATE</span>
<span class="t" style="left:1332.30px;top:797px;font-size:11px;line-height:11px;color:#222;-webkit-text-stroke:0.22px #222;letter-spacing:-0.242px;transform:scaleX(0.9395);">ASSIGNEES</span>
<span class="t" style="left:1451.46px;top:797px;font-size:11px;line-height:11px;color:#222;-webkit-text-stroke:0.22px #222;letter-spacing:-0.242px;transform:scaleX(0.9567);">PRIORITY</span>
<span class="t" style="left:1541.54px;top:797px;font-size:11px;line-height:11px;color:#222;-webkit-text-stroke:0.22px #222;letter-spacing:-0.242px;transform:scaleX(0.9774);">FILES</span>
<span class="t" style="left:1591.88px;top:797px;font-size:11px;line-height:11px;color:#222;-webkit-text-stroke:0.22px #222;letter-spacing:-0.242px;transform:scaleX(0.9852);">TAGS</span>
<div class="b" style="left:222px;top:808px;width:1479px;height:1px;background:#111;"></div>
<span class="t" style="left:230.14px;top:820px;font-size:14px;line-height:14px;color:#1f3b45;-webkit-text-stroke:0.22px #1f3b45;letter-spacing:-0.308px;transform:scaleX(0.9421);">2.1</span>
<span class="t" style="left:290.01px;top:820px;font-size:14px;line-height:14px;color:#1f3b45;-webkit-text-stroke:0.22px #1f3b45;letter-spacing:0.010px;">0</span>
<svg class="b" style="left:360px;top:819.2px;" width="20" height="20" viewBox="0 0 20 20"><circle cx="10" cy="10" r="7.6" fill="none" stroke="#2d4f5b" stroke-width="1.25"/><path d="M6.5 10.400l2.400 2.400L13.700 7.800" fill="none" stroke="#2d4f5b" stroke-width="1.25"/></svg>
<span class="t" style="left:387.48px;top:821px;font-size:14px;line-height:14px;color:#1f3b45;-webkit-text-stroke:0.22px #1f3b45;letter-spacing:0.009px;">Bid Vault Pricing Options</span>
<div class="b" style="left:1068px;top:820px;width:47px;height:20px;background:#8576cc;border-radius:9.500px;"></div>
<span class="t" style="left:1075.88px;top:824px;font-size:12px;line-height:12px;color:#fff;font-weight:700;-webkit-text-stroke:0.3px #fff;letter-spacing:-0.264px;transform:scaleX(0.9770);">To Do</span>
<span class="t" style="left:1140.95px;top:822px;font-size:14px;line-height:14px;color:#1f9d6e;-webkit-text-stroke:0.22px #1f9d6e;letter-spacing:0.592px;">12/10/2024</span>
<span class="t" style="left:1236.51px;top:822px;font-size:14px;line-height:14px;color:#222;-webkit-text-stroke:0.22px #222;letter-spacing:0.553px;">01/22/2025</span>
<svg class="b" style="left:1408.8px;top:821px;" width="24" height="24" viewBox="0 0 24 24"><g fill="none" stroke="#2a505c" stroke-width="1.250"><path d="M13.350 2.790A9 9 0 1 0 21.010 10.450"/><circle cx="12.100" cy="10.900" r="3.800"/><path d="M5.400 18.300A8.200 8.200 0 0 1 19.100 18.300"/><path d="M18.900 2.600v5.400M16.200 5.300h5.400"/></g></svg>
<div class="b" style="left:1459px;top:817px;width:55px;height:20px;background:#ffa305;border-radius:9.500px;"></div>
<span class="t" style="left:1466.22px;top:821px;font-size:12px;line-height:12px;color:#fff;font-weight:700;-webkit-text-stroke:0.3px #fff;letter-spacing:-0.136px;">Normal</span>
<span class="t" style="left:1589.68px;top:824px;font-size:14px;line-height:14px;color:#2b5866;-webkit-text-stroke:0.22px #2b5866;letter-spacing:0.113px;">No tags</span>
<div class="b" style="left:281px;top:809px;width:1px;height:37px;background:#33606b;"></div>
<div class="b" style="left:351px;top:809px;width:1px;height:37px;background:#33606b;"></div>
<div class="b" style="left:1051px;top:809px;width:1px;height:37px;background:#33606b;"></div>
<div class="b" style="left:1131px;top:809px;width:1px;height:37px;background:#33606b;"></div>
<div class="b" style="left:1226px;top:809px;width:1px;height:37px;background:#33606b;"></div>
<div class="b" style="left:1321px;top:809px;width:1px;height:37px;background:#33606b;"></div>
<div class="b" style="left:1441px;top:809px;width:1px;height:37px;background:#33606b;"></div>
<div class="b" style="left:1531px;top:809px;width:1px;height:37px;background:#33606b;"></div>
<div class="b" style="left:1581px;top:809px;width:1px;height:37px;background:#33606b;"></div>
<div class="b" style="left:1692px;top:809px;width:1px;height:37px;background:#33606b;"></div>
<svg class="b" style="left:946px;top:443px;" width="20" height="20" viewBox="0 0 20 20"><circle cx="10" cy="10" r="6.600" fill="none" stroke="#2d4f5b" stroke-width="1"/><path d="M10 7.300v5.400M7.300 10h5.400" stroke="#6c8790" stroke-width="1.2"/></svg>
<svg class="b" style="left:976px;top:443px;" width="24" height="20" viewBox="0 0 24 20"><path d="M2.200 10C5 5.500 8.500 3.800 12 3.800S19 5.500 21.800 10C19 14.500 15.500 16.200 12 16.200S5 14.500 2.200 10z" fill="none" stroke="#2d4f5b" stroke-width="1.3"/><circle cx="12" cy="10" r="3.600" fill="none" stroke="#2d4f5b" stroke-width="1.5"/></svg>
<svg class="b" style="left:1010px;top:441px;" width="22" height="22" viewBox="0 0 22 22"><path d="M3.600 5.800h14.500M8.300 5.800c0-3.400 5.200-3.400 5.200 0M5.200 5.800v12.300h11.200V5.800" stroke="#2d4f5b" stroke-width="1.150" fill="none"/><path d="M9.300 9.600v5.400M12.400 9.600v5.400" stroke="#6c8790" stroke-width="1.2"/></svg>
<div class="b" style="left:999px;top:428px;width:42px;height:44px;background:transparent;border:3px solid #ff2600;box-sizing:border-box;"></div>
<div class="b" style="left:206px;top:846px;width:1519px;height:14px;background:#e8f0ef;"></div>
<div class="b" style="left:206px;top:845px;width:1519px;height:1px;background:#44737e;"></div>
<span class="t" style="left:214.00px;top:848px;font-size:12px;line-height:12px;color:#333;-webkit-text-stroke:0.22px #333;letter-spacing:-0.113px;">v3.14.8</span>
<span class="t" style="left:1458.60px;top:847px;font-size:12px;line-height:12px;color:#222;-webkit-text-stroke:0.22px #222;letter-spacing:0.019px;">Copyright © 2024 AnamiTech, All rights reserved</span>
<div class="b" style="left:206px;top:0px;width:1519px;height:59px;background:#44737e;box-shadow:0 2px 6px rgba(0,0,0,.28);"></div>
<svg class="b" style="left:254px;top:0px;" width="180" height="59" viewBox="0 0 180 59"><g fill="none" stroke="#fff" stroke-width="1.55" stroke-linecap="butt">
<path d="M35.300 16.800A12.300 13.300 0 1 0 30.500 39.300" stroke-width="2.500"/>
<path d="M23.400 37.800C24.400 30.600 30.600 25.900 41 25.500C41.400 32.600 35 39.300 23.400 37.800z" stroke-width="1.900"/>
<path d="M25.200 36.600L37 28.700" stroke-width="0.800"/>
<path d="M43.300 24.500V37.400M43.300 29.500C43.500 26.500 45 24.800 47.500 24.900"/>
<path d="M49.300 30.600H62.000A6.400 6.400 0 1 0 60.200 35.500"/>
<path d="M64.600 30.600H77.300A6.400 6.400 0 1 0 75.500 35.500"/>
<path d="M80.600 24.500V37.400M80.600 30C80.600 23.200 91 23.200 91 30V37.400"/>
<path d="M106 21.500C105 17.500 96.500 17.300 96.300 22.700C96.300 28.500 106.800 26.500 106.800 32.800C106.600 38.800 96 39 94.800 33.500"/>
<path d="M109.400 24.500V43.600"/><circle cx="116.500" cy="31" r="6.600"/>
<circle cx="132.300" cy="31" r="6.600"/><path d="M139.200 24.500V37.400"/>
<path d="M153.200 27A6.500 6.500 0 1 0 153.200 35"/>
<path d="M155.500 30.600H168.200A6.400 6.400 0 1 0 166.400 35.500"/>
</g></svg>
<div class="b" style="left:1140px;top:8px;width:220px;height:38px;background:#fff;border-radius:10px;"></div>
<span class="t" style="left:1152.08px;top:20px;font-size:14px;line-height:14px;color:#333;-webkit-text-stroke:0.22px #333;letter-spacing:-0.308px;transform:scaleX(0.9993);">Demo - Guac &amp; Salsa</span>
<svg class="b" style="left:1307px;top:20px;" width="14" height="14" viewBox="0 0 14 14"><path d="M2.600 2.600l8.800 8.800M11.400 2.600l-8.800 8.800" stroke="#111" stroke-width="2.100"/></svg>
<svg class="b" style="left:1333.6px;top:20px;" width="16" height="16" viewBox="0 0 16 16"><path d="M2.800 5.300L8 10.500L13.200 5.300" stroke="#111" stroke-width="2.100" fill="none"/></svg>
<div class="b" style="left:1388px;top:9px;width:129px;height:39.5px;background:#fff;border-radius:10px;"></div>
<span class="t" style="left:1404.84px;top:22px;font-size:14px;line-height:14px;color:#1f4552;-webkit-text-stroke:0.39px #1f4552;letter-spacing:0.061px;">Invite new user</span>
<div class="b" style="left:1547px;top:18px;width:20px;height:20px;background:#fff;border-radius:3px;"></div>
<svg class="b" style="left:1547px;top:18px;" width="20" height="20" viewBox="0 0 20 20"><path d="M10.100 2.700L4.300 6.300H15.900z" fill="none" stroke="#3d6e79" stroke-width="1.200" stroke-linejoin="round"/><path d="M3.300 6.500H16.900" stroke="#3d6e79" stroke-width="1.100"/><path d="M5.400 8.200v7.500M8.500 8.200v7.500M11.700 8.200v7.500M14.800 8.200v7.500" stroke="#3d6e79" stroke-width="1.250"/><path d="M3.300 17.400h13.600" stroke="#3d6e79" stroke-width="1.200"/></svg>
<svg class="b" style="left:1607px;top:16px;" width="20" height="24" viewBox="0 0 20 24"><path d="M4 1.500h8.200l5.300 5.300V20a2 2 0 0 1-2 2H4a2 2 0 0 1-2-2V3.500a2 2 0 0 1 2-2z" fill="#fff"/><path d="M5.300 6.700h6.800M5.300 9.900h8.800M5.300 13h4.800" stroke="#44737e" stroke-width="1.200"/></svg>
<div class="b" style="left:1621.9px;top:3.9px;width:20px;height:17.8px;background:#e01300;border-radius:8.900px;border:1.200px solid #fff;box-sizing:border-box;"></div>
<span class="t" style="left:1628.24px;top:7px;font-size:12px;line-height:12px;color:#fff;font-weight:700;letter-spacing:0.820px;">2</span>
<svg class="b" style="left:1665px;top:15px;" width="24" height="26" viewBox="0 0 24 26"><path d="M12 2.300c0.900 0 1.500 0.600 1.500 1.400c3 0.900 4.500 3.500 4.500 6.800c0 3.700 0.700 6.200 2.800 8.300c0.500 0.600 0.200 1.500-0.700 1.500H3.900c-0.900 0-1.200-0.900-0.700-1.500C5.300 16.700 6 14.200 6 10.500c0-3.300 1.500-5.900 4.500-6.800c0-0.800 0.600-1.400 1.500-1.400z" fill="#fff"/><path d="M8.800 21.800h6.400a3.200 2.600 0 0 1-6.400 0z" fill="#fff"/></svg>
<div class="b" style="left:1682.5px;top:3.9px;width:23.4px;height:17.8px;background:#e01300;border-radius:8.900px;border:1.200px solid #fff;box-sizing:border-box;"></div>
<span class="t" style="left:1687.44px;top:7px;font-size:12px;line-height:12px;color:#fff;font-weight:700;letter-spacing:1.160px;">26</span>
<div class="b" style="left:1717px;top:106px;width:8px;height:204px;background:#37626c;border-radius:4px 0 4px 4px;"></div>
<div class="b" style="left:1725px;top:0px;width:6px;height:279px;background:#37626c;border-radius:0;"></div>
<div class="b" style="left:1725px;top:59px;width:0px;height:0px;background:#37626c;"></div>
<div class="b" style="left:0px;top:0px;width:198px;height:860px;background:#1a3740;"></div>
<div class="b" style="left:198px;top:84px;width:8px;height:776px;background:#37626c;border-radius:4px 4px 0 0;"></div>
<div class="b" style="left:14px;top:144px;width:168px;height:50px;background:#486268;border-radius:11px;"></div>
<span class="t" style="left:67.12px;top:64px;font-size:14px;line-height:14px;color:#fff;font-weight:700;letter-spacing:-0.308px;transform:scaleX(0.9637);">Dashboard</span>
<span class="t" style="left:67.11px;top:162px;font-size:14px;line-height:14px;color:#fff;font-weight:700;letter-spacing:-0.308px;transform:scaleX(0.9734);">Projects</span>
<span class="t" style="left:67.12px;top:260px;font-size:14px;line-height:14px;color:#fff;font-weight:700;letter-spacing:-0.308px;transform:scaleX(0.9692);">Locations</span>
<span class="t" style="left:67.13px;top:358px;font-size:14px;line-height:14px;color:#fff;font-weight:700;letter-spacing:-0.308px;transform:scaleX(0.9556);">File Library</span>
<span class="t" style="left:67.66px;top:512px;font-size:14px;line-height:14px;color:#fff;font-weight:700;letter-spacing:-0.308px;transform:scaleX(0.9597);">Service Providers</span>
<span class="t" style="left:67.66px;top:590px;font-size:14px;line-height:14px;color:#fff;font-weight:700;letter-spacing:-0.308px;transform:scaleX(0.9630);">Settings</span>
<span class="t" style="left:67.11px;top:668px;font-size:14px;line-height:14px;color:#fff;font-weight:700;letter-spacing:-0.308px;transform:scaleX(0.9811);">Help Center</span>
<span class="t" style="left:67.14px;top:746px;font-size:14px;line-height:14px;color:#fff;font-weight:700;letter-spacing:-0.308px;transform:scaleX(0.9450);">Log Out</span>
<span class="t" style="left:78.96px;top:824px;font-size:14px;line-height:14px;color:#fff;font-weight:700;letter-spacing:-0.308px;transform:scaleX(0.9635);">Sarah Brilz</span>
<div class="b" style="left:14.8px;top:806.8px;width:48.4px;height:48.4px;background:#3f626b;border-radius:25px;"></div>
<span class="t" style="left:30.49px;top:825px;font-size:13px;line-height:13px;color:#050505;font-weight:700;letter-spacing:-0.286px;transform:scaleX(0.9660);">SB</span>
<svg class="b" style="left:27px;top:59px;" width="24" height="24" viewBox="0 0 24 24"><path d="M13.400 12.600L13.740 2.900A9.700 9.700 0 1 1 4.540 16.550z" fill="#fff"/><path d="M12.400 11.600L2.640 15.740A10.600 10.600 0 0 1 12.200 1z" fill="#fff"/></svg>
<svg class="b" style="left:27px;top:158px;" width="24" height="22" viewBox="0 0 24 22"><path d="M5.400 1.800H18.600Q20.300 1.800 20.800 3.600L22.700 10.500V18.300Q22.700 20.300 20.700 20.300H3.300Q1.300 20.300 1.300 18.300V10.500L3.200 3.600Q3.700 1.800 5.400 1.800z" fill="#fff"/><path d="M4.800 4.300H19.200L20.600 10.500H3.400z" fill="#486268"/><path d="M5.700 5.900H18M5 8.900H19" stroke="#fff" stroke-width="1.500"/><path d="M9.900 10.400v1.300a2 2 0 0 0 4 0v-1.300z" fill="#486268"/></svg>
<svg class="b" style="left:29px;top:255px;" width="20" height="24" viewBox="0 0 20 24"><path d="M10 1.200c4.300 0 7.800 3.200 7.800 7.500c0 4-3.800 8.300-7.800 14c-4-5.700-7.800-10-7.800-14c0-4.300 3.500-7.500 7.800-7.500z" fill="#fff"/><circle cx="10" cy="8.900" r="2.400" fill="#fff" stroke="#1a3740" stroke-width="1.500"/></svg>
<svg class="b" style="left:29px;top:353px;" width="20" height="24" viewBox="0 0 20 24"><path d="M4.600 1h6.400l7.500 7.500v11.500a3 3 0 0 1-3 3H4.600a3 3 0 0 1-3-3V4a3 3 0 0 1 3-3z" fill="#fff"/><path d="M10.100 0.500v6.600a1.600 1.600 0 0 0 1.600 1.600h7" stroke="#1a3740" stroke-width="1.300" fill="none"/></svg>
<svg class="b" style="left:24px;top:429px;" width="20" height="24" viewBox="0 0 20 24"><path d="M14.500 4L5.800 12.300L14.500 20.500" stroke="#fff" stroke-width="2.400" fill="none"/></svg>
<svg class="b" style="left:19px;top:499px;" width="40" height="40" viewBox="0 0 40 40"><path d="M8.900 17.300L13.200 12.900M26.800 12.900L31.100 17.300" stroke="#fff" stroke-width="1.900" stroke-linecap="round"/><path d="M10 19.100L16.200 13.300H21L22.500 12.600L25.300 13.400L30 19.300L26.300 22.800V23.900L22 27.300Q20 28.500 18.300 27.300z" fill="#fff" stroke="#fff" stroke-width="0.600" stroke-linejoin="round"/><path d="M18.200 13.100C16.500 14.800 14.900 16.500 15.300 18.100C16 20.500 20 20.800 22.700 18.600L26.500 23.200" stroke="#1a3740" stroke-width="1.200" fill="none"/></svg>
<svg class="b" style="left:27px;top:585px;" width="24" height="24" viewBox="0 0 24 24"><path d="M15.21 4.78L14.74 1.76L9.26 1.76L8.79 4.78L7.36 5.61L4.50 4.50L1.76 9.26L4.14 11.17L4.14 12.83L1.76 14.74L4.50 19.50L7.36 18.39L8.79 19.22L9.26 22.24L14.74 22.24L15.21 19.22L16.64 18.39L19.50 19.50L22.24 14.74L19.86 12.83L19.86 11.17L22.24 9.26L19.50 4.50L16.64 5.61z" fill="#fff" stroke="#fff" stroke-width="1.600" stroke-linejoin="round"/><circle cx="12" cy="12" r="3.050" fill="#fff" stroke="#1a3740" stroke-width="1.600"/></svg>
<div class="b" style="left:29.8px;top:665.6px;width:18.4px;height:18.4px;background:#fff;border-radius:10px;"></div>
<span class="t" style="left:35.70px;top:670px;font-size:12.5px;line-height:12.5px;color:#1a3740;-webkit-text-stroke:0.22px #1a3740;">?</span>
<div class="b" style="left:43.2px;top:652.9px;width:19.8px;height:18.3px;background:#e01300;border-radius:9.200px;border:1.200px solid #fff;box-sizing:border-box;box-shadow:0 0 0 1.500px #1a3740;"></div>
<span class="t" style="left:49.58px;top:656px;font-size:12px;line-height:12px;color:#fff;font-weight:700;">1</span>
<svg class="b" style="left:27px;top:741px;" width="26" height="24" viewBox="0 0 26 24"><rect x="2" y="3.700" width="13" height="16.600" rx="2.600" fill="#fff"/><path d="M7.800 12h7.200" stroke="#1a3740" stroke-width="1.600"/><path d="M15 12h6.200M17 7.700L21.600 12L17 16.300" stroke="#fff" stroke-width="1.600" fill="none"/></svg>
</div></body></html>
